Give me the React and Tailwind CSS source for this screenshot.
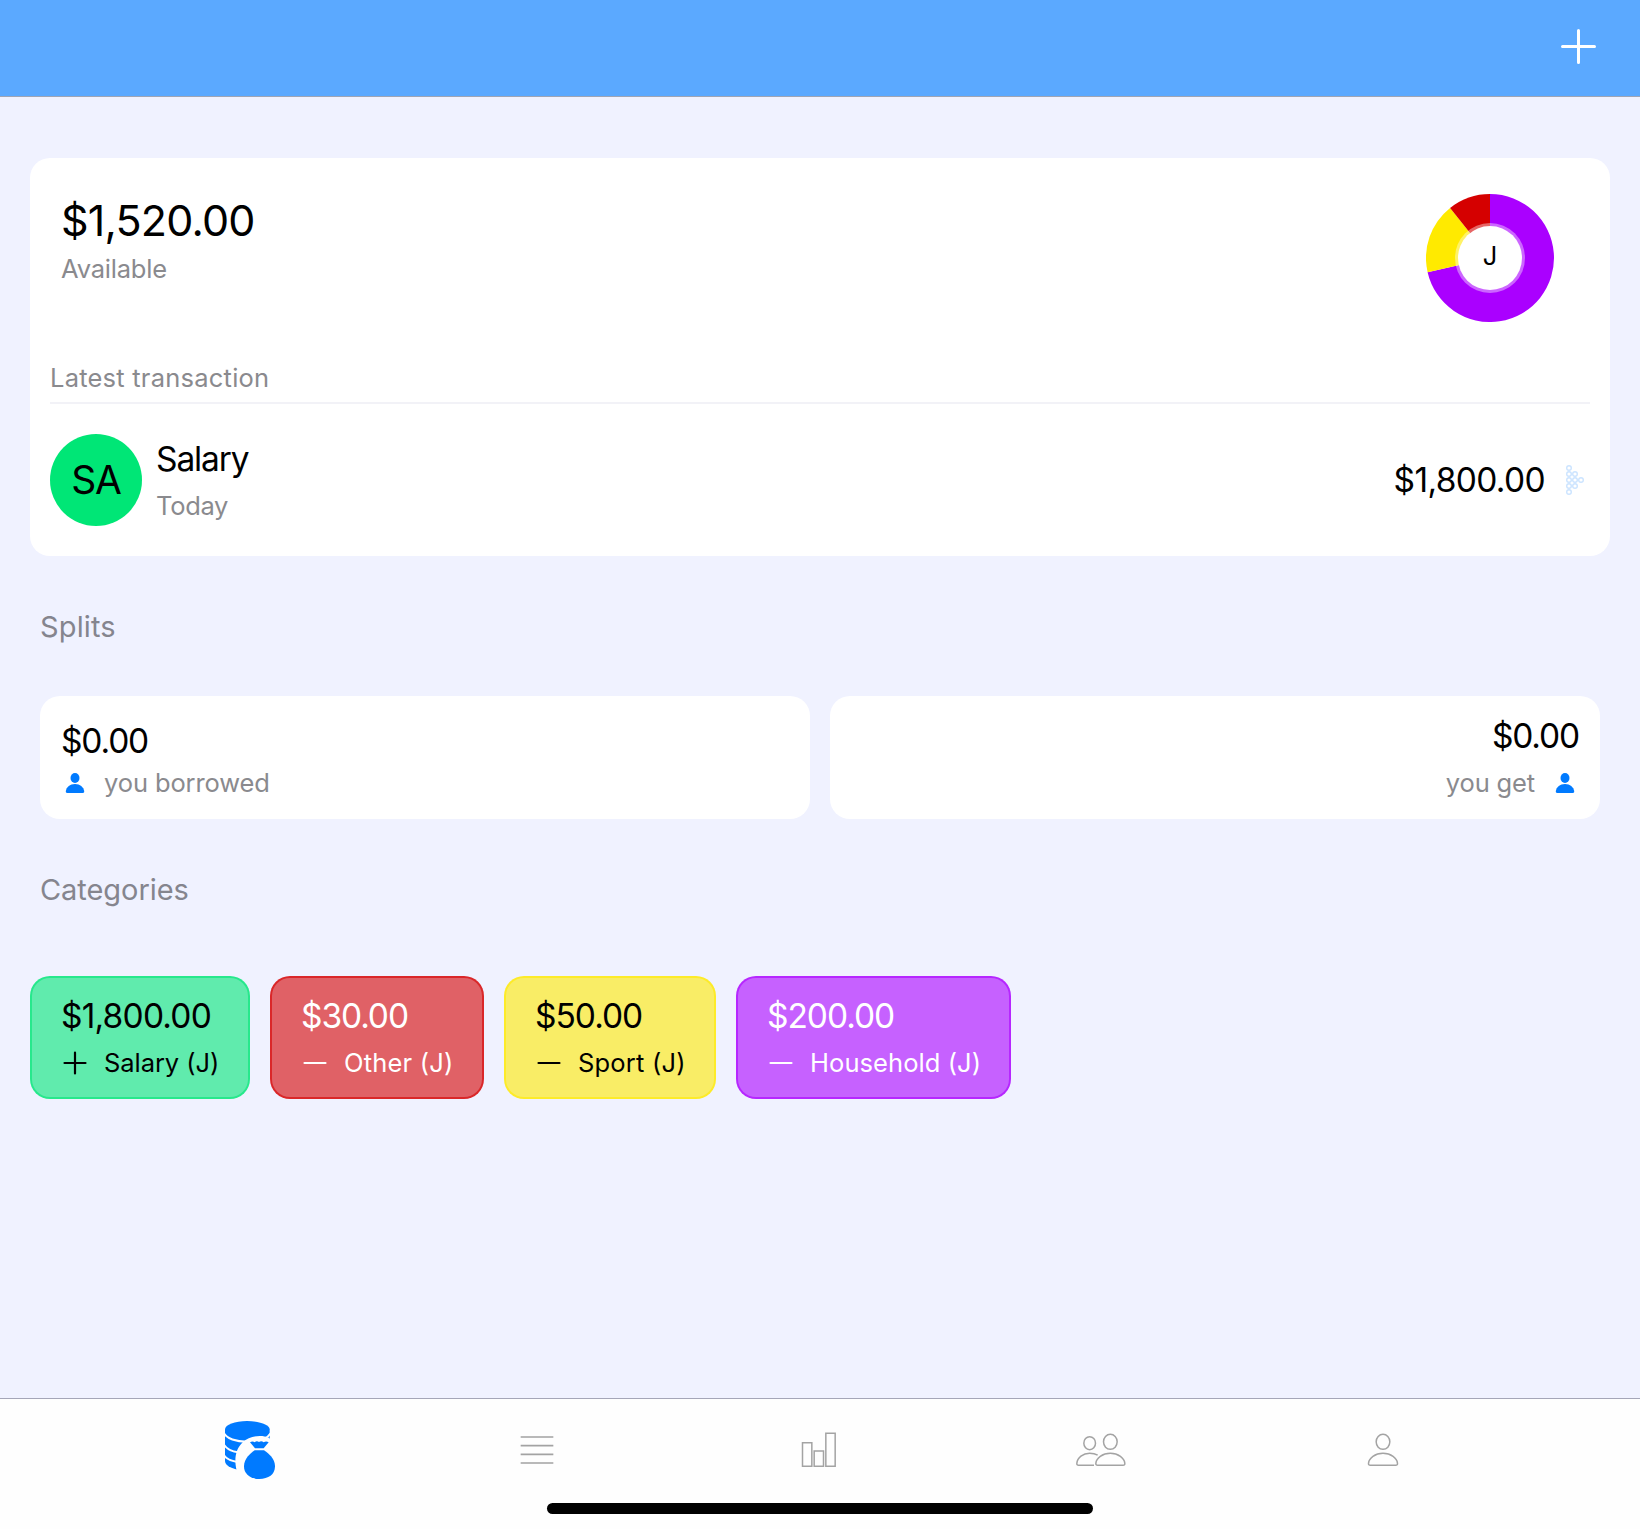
import React from "react";

function PersonFilled() {
  return (
    <svg className="size-7 shrink-0" viewBox="0 0 84 84" fill="#007aff">
      <ellipse cx="42" cy="27" rx="13.5" ry="15" />
      <path d="M19 72C15 72 14 70 14.500 66C16 55 27 45 42 45C57 45 68 55 69.500 66C70 70 69 72 65 72Z" />
    </svg>
  );
}

function Sign({ plus }) {
  return (
    <svg className="size-7 shrink-0" viewBox="0 0 28 28" stroke="currentColor" strokeWidth="2.200" strokeLinecap="round">
      <path d={plus ? "M3.500 14H24.500M14 3.500V24.500" : "M3.500 14H24.500"} />
    </svg>
  );
}

function Donut() {
  return (
    <div className="relative size-32">
      <svg className="size-32" viewBox="-64 -64 128 128">
        <path d="M0 0V-64A64 64 0 1 1 -62.400 14.240Z" fill="#aa00ff" />
        <path d="M0 0L-62.400 14.240A64 64 0 0 1 -39.900 -50.040Z" fill="#ffea00" />
        <path d="M0 0L-39.900 -50.040A64 64 0 0 1 0 -64Z" fill="#d50000" />
        <circle r="35" fill="#fff" fillOpacity=".4" />
        <circle r="32" fill="#fff" />
      </svg>
      <span className="absolute inset-0 flex items-center justify-center pb-1 text-[25.5px] leading-8">J</span>
    </div>
  );
}

const dots = [[4, 4], [4, 10], [4, 16], [4, 22], [4, 28], [10, 10], [10, 16], [10, 22], [16, 16]];

function DottedArrow() {
  return (
    <svg className="h-8 w-5" viewBox="0 0 20 32" fill="none" stroke="#cce4ff" strokeWidth="1.400">
      {dots.map(([x, y]) => (
        <circle key={`${x}-${y}`} cx={x} cy={y} r="2.300" />
      ))}
    </svg>
  );
}

function TabIcon({ viewBox, children, sw = 4.5 }) {
  return (
    <button className="flex w-[282px] justify-center">
      <svg className="h-[70px] w-[60px]" viewBox={viewBox} fill="none" stroke="#a3a3a3" strokeWidth={sw}>
        {children}
      </svg>
    </button>
  );
}

function PersonOutline() {
  return (
    <>
      <ellipse cx="151" cy="155.500" rx="20.500" ry="22.500" />
      <path d="M113 226Q107 226 107.500 220C109 205 127 190 151 190C175 190 193 205 194.500 220Q195 226 189 226Z" />
    </>
  );
}

const categories = [
  { amount: "$1,800.00", name: "Salary (J)", plus: true, box: "w-[220px] bg-[#00e676]/60 border-[#00e676]/60 text-black", a: "tracking-[-0.8px]", n: "tracking-[-0.07px]" },
  { amount: "$30.00", name: "Other (J)", box: "w-[214px] bg-[#d50000]/60 border-[#d50000]/60 text-white", a: "tracking-[-1.1px]", n: "tracking-[0.2px]" },
  { amount: "$50.00", name: "Sport (J)", box: "w-[212px] bg-[#ffea00]/60 border-[#ffea00]/60 text-black", a: "tracking-[-1px]", n: "tracking-[0.2px]" },
  { amount: "$200.00", name: "Household (J)", box: "w-[275px] bg-[#aa00ff]/60 border-[#aa00ff]/60 text-white", a: "tracking-[-1.05px]", n: "tracking-[0.07px]" },
];

export default function App() {
  return (
    <div className="flex h-[1529px] w-[1640px] flex-col overflow-hidden bg-[#f0f2ff] font-['Inter',sans-serif] text-black">
      <header className="flex h-[97px] shrink-0 justify-end border-b border-[#9fa5b5] bg-[#5ba9ff] pt-7 pr-[43px]">
        <svg className="size-9" viewBox="0 0 36 36" stroke="#fff" strokeWidth="3" strokeLinecap="round">
          <path d="M1.500 18.500H33.500M17.500 2.500V34.500" />
        </svg>
      </header>

      <main className="flex flex-1 flex-col px-[30px] pt-[61px]">
        <section className="flex h-[398px] flex-col rounded-[20px] bg-white px-5">
          <div className="flex h-[203px] justify-between pt-9 pr-[36px] pl-[11px]">
            <div>
              <div className="text-[43px] leading-[52px] tracking-[-0.8px]">$1,520.00</div>
              <div className="mt-[7px] text-[25.5px] leading-8 tracking-[-0.2px] text-[#8a8a8e]">Available</div>
            </div>
            <Donut />
          </div>
          <div className="h-[43px] border-b-2 border-[#f2f2f7] text-[25.5px] leading-[34px] tracking-[0.23px] text-[#8a8a8e]">Latest transaction</div>
          <div className="mt-[30px] flex h-[92px] items-center">
            <div className="flex size-[92px] items-center justify-center rounded-full bg-[#00e676] text-[39px] tracking-[-1.2px]">SA</div>
            <div className="ml-3.5">
              <div className="text-[33.5px] leading-10 tracking-[-1.1px]">Salary</div>
              <div className="mt-[11px] text-[25.5px] leading-8 tracking-[-0.3px] text-[#8a8a8e]">Today</div>
            </div>
            <div className="mr-5 ml-auto text-[33.5px] leading-10 tracking-[-0.65px]">$1,800.00</div>
            <div className="mr-[5px]">
              <DottedArrow />
            </div>
          </div>
        </section>

        <h2 className="mt-[53px] ml-2.5 text-[29px] leading-9 tracking-[0.15px] text-[#85858e]">Splits</h2>
        <section className="mx-2.5 mt-[51px] flex gap-5">
          <div className="h-[123px] flex-1 rounded-[20px] bg-white pt-[25px] pl-[21px]">
            <div className="text-[33.5px] leading-10 tracking-[-1.15px]">$0.00</div>
            <div className="mt-1.5 flex items-center gap-[15px] text-[25.5px] leading-8 tracking-[-0.12px] text-[#8a8a8e]">
              <PersonFilled />
              you borrowed
            </div>
          </div>
          <div className="flex h-[123px] flex-1 flex-col items-end rounded-[20px] bg-white pt-5 pr-[21px]">
            <div className="text-[33.5px] leading-10 tracking-[-1.15px]">$0.00</div>
            <div className="mt-[11px] flex items-center gap-4 text-[25.5px] leading-8 tracking-[-0.15px] text-[#8a8a8e]">
              you get
              <PersonFilled />
            </div>
          </div>
        </section>

        <h2 className="mt-[53px] ml-2.5 text-[29px] leading-9 tracking-[-0.06px] text-[#85858e]">Categories</h2>
        <section className="mt-[68px] flex gap-5">
          {categories.map((c) => (
            <div key={c.name} className={`h-[123px] shrink-0 rounded-[20px] border-2 pt-[18px] pl-[29px] whitespace-nowrap ${c.box}`}>
              <div className={`text-[33.5px] leading-10 ${c.a}`}>{c.amount}</div>
              <div className={`mt-[11px] flex items-center gap-[15px] text-[25.5px] leading-8 ${c.n}`}>
                <Sign plus={c.plus} />
                {c.name}
              </div>
            </div>
          ))}
        </section>
      </main>

      <footer className="flex h-[131px] shrink-0 flex-col items-center border-t border-[#a5a6b8] bg-[#fefefe] pt-4">
        <nav className="flex w-[1412px]">
          <TabIcon viewBox="75 75 180 210" sw={0}>
            <path d="M75 118C75 104 105 93 141 93C178 93 209 104 209 118V213A67 29 0 0 1 75 213Z" fill="#007aff" stroke="none" />
            <path d="M72 130C80 146 108 155 141 155C174 155 202 146 212 130M72 164C80 177 95 184 115 187M72 196C80 209 95 213 112 216" stroke="#fefefe" strokeWidth="6" />
            <path d="M113 252C101 215 104 180 128 157C148 138 182 133 207 143L210 147L222 150V252Z" fill="#fefefe" stroke="none" />
            <path d="M150 157Q158 152 164 157Q170 151 177 156Q184 151 191 157Q198 152 206 157L191 175H165Z" fill="#007aff" stroke="none" />
            <path d="M164 181H192C206 191 225 206 225 229C225 254 205 267 178 267C150 267 132 252 132 229C132 206 151 191 164 181Z" fill="#007aff" stroke="none" />
          </TabIcon>
          <TabIcon viewBox="21 75 180 210" sw={5}>
            <path d="M62 141H160M62 167H160M62 193H160M62 219H160" />
          </TabIcon>
          <TabIcon viewBox="867 75 180 210">
            <path d="M907.500 158H935.500V228.500H907.500ZM942.500 183H970.500V228.500H942.500ZM977.500 130H1005.500V228.500H977.500Z" />
          </TabIcon>
          <TabIcon viewBox="33 75 180 210">
            <PersonOutline />
            <ellipse cx="89" cy="159.500" rx="17.500" ry="19.500" />
            <path d="M102 226H56Q50 226 50.500 220C52 203 69 190 89 190Q103 190 113 195.500" />
          </TabIcon>
          <TabIcon viewBox="61 75 180 210">
            <PersonOutline />
          </TabIcon>
        </nav>
        <div className="mt-[18px] h-[11px] w-[546px] rounded-full bg-black" />
      </footer>
    </div>
  );
}
